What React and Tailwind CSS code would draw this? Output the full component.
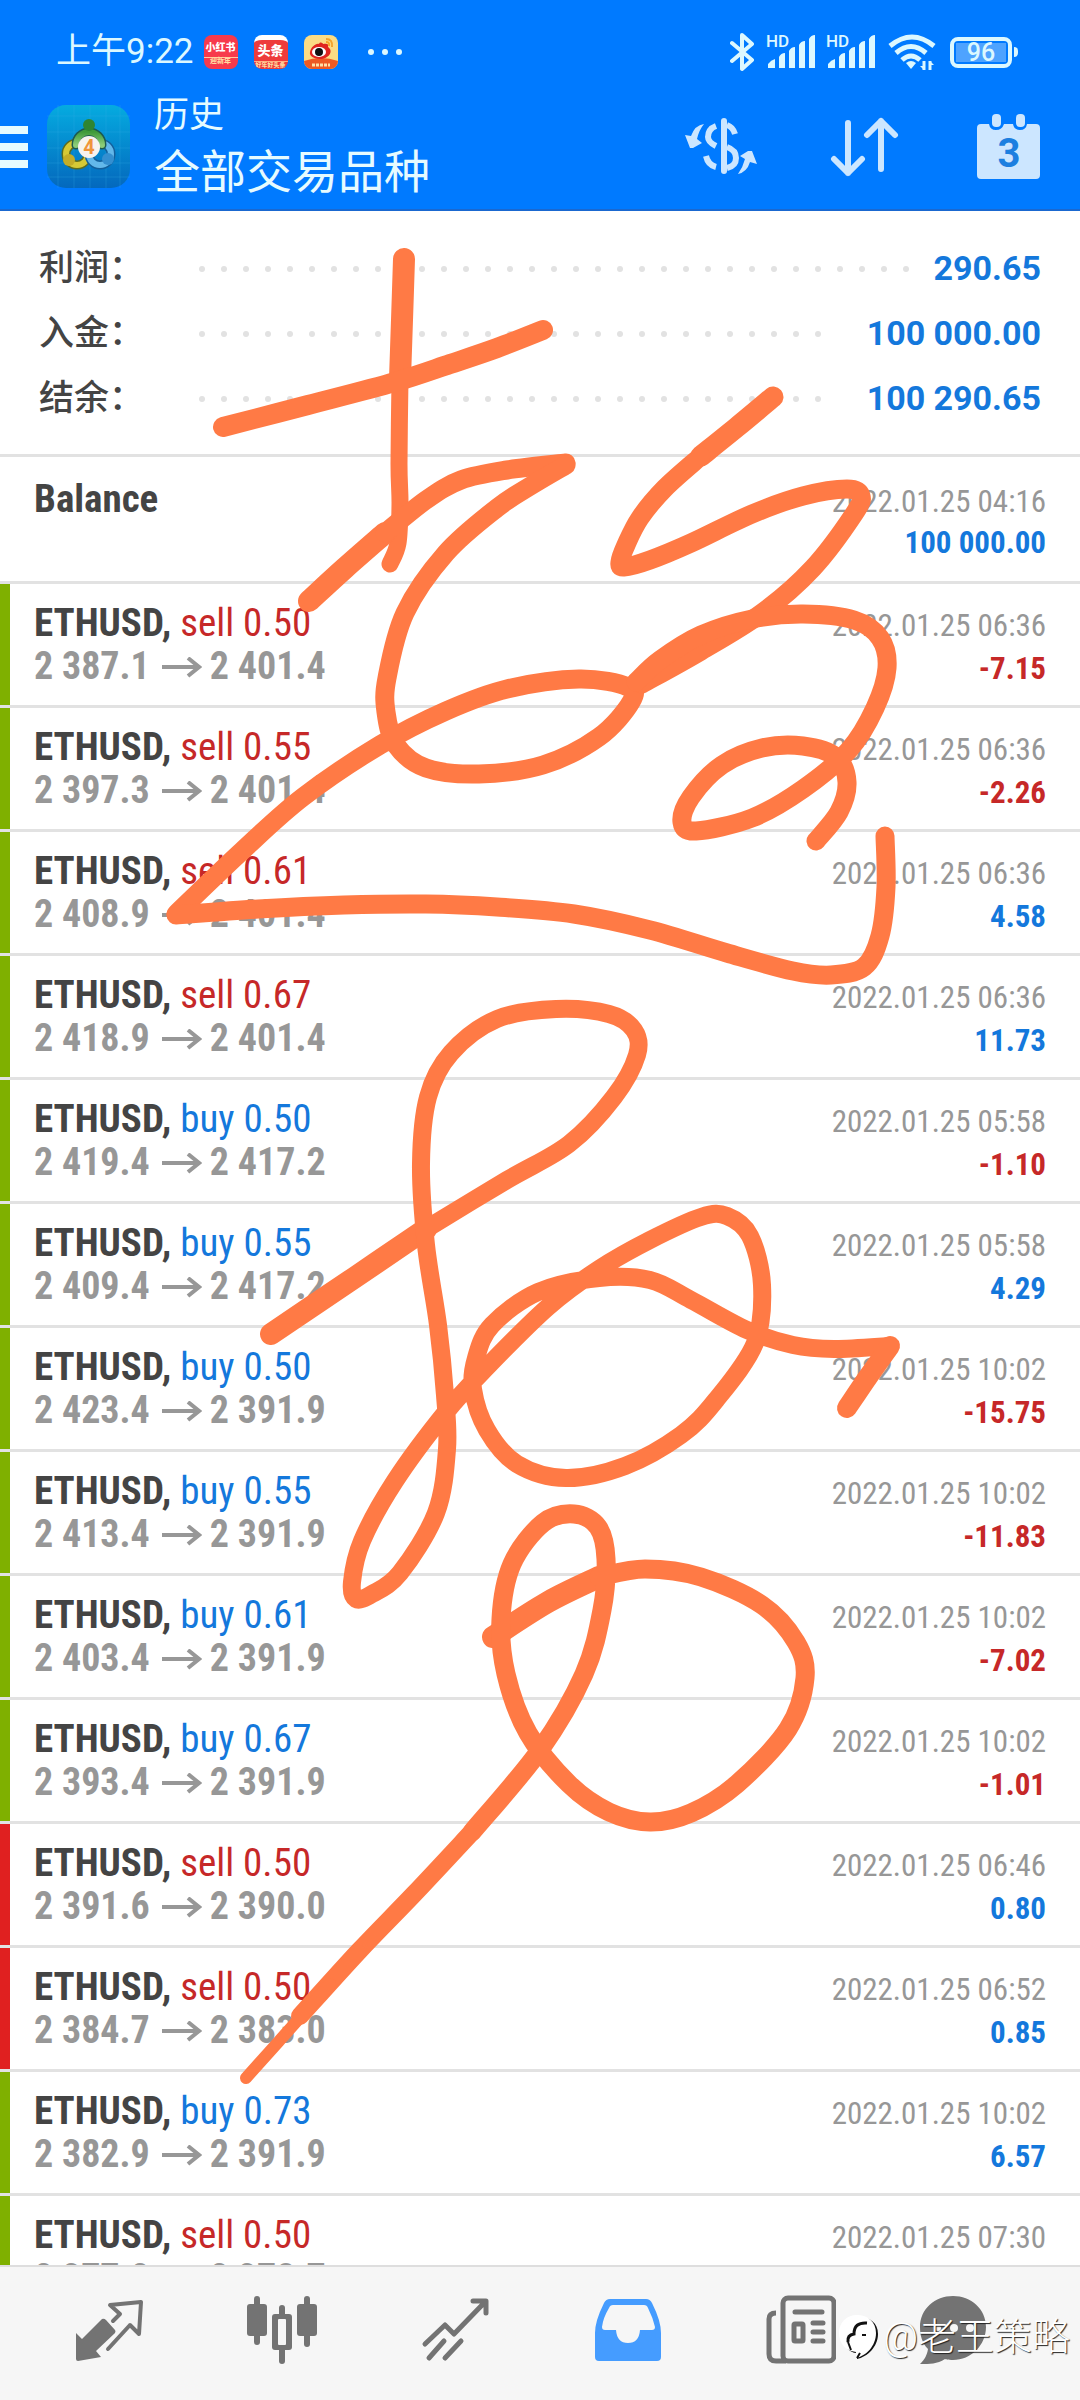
import React from "react";

const summary = [
  { label: "利润", value: "290.65", dots: 33 },
  { label: "入金", value: "100 000.00", dots: 29 },
  { label: "结余", value: "100 290.65", dots: 29 },
];

const deals = [
  { side: "sell", lot: "0.50", open: "2 387.1", close: "2 401.4", time: "2022.01.25 06:36", profit: "-7.15", mark: "green" },
  { side: "sell", lot: "0.55", open: "2 397.3", close: "2 401.4", time: "2022.01.25 06:36", profit: "-2.26", mark: "green" },
  { side: "sell", lot: "0.61", open: "2 408.9", close: "2 401.4", time: "2022.01.25 06:36", profit: "4.58", mark: "green" },
  { side: "sell", lot: "0.67", open: "2 418.9", close: "2 401.4", time: "2022.01.25 06:36", profit: "11.73", mark: "green" },
  { side: "buy", lot: "0.50", open: "2 419.4", close: "2 417.2", time: "2022.01.25 05:58", profit: "-1.10", mark: "green" },
  { side: "buy", lot: "0.55", open: "2 409.4", close: "2 417.2", time: "2022.01.25 05:58", profit: "4.29", mark: "green" },
  { side: "buy", lot: "0.50", open: "2 423.4", close: "2 391.9", time: "2022.01.25 10:02", profit: "-15.75", mark: "green" },
  { side: "buy", lot: "0.55", open: "2 413.4", close: "2 391.9", time: "2022.01.25 10:02", profit: "-11.83", mark: "green" },
  { side: "buy", lot: "0.61", open: "2 403.4", close: "2 391.9", time: "2022.01.25 10:02", profit: "-7.02", mark: "green" },
  { side: "buy", lot: "0.67", open: "2 393.4", close: "2 391.9", time: "2022.01.25 10:02", profit: "-1.01", mark: "green" },
  { side: "sell", lot: "0.50", open: "2 391.6", close: "2 390.0", time: "2022.01.25 06:46", profit: "0.80", mark: "red" },
  { side: "sell", lot: "0.50", open: "2 384.7", close: "2 383.0", time: "2022.01.25 06:52", profit: "0.85", mark: "red" },
  { side: "buy", lot: "0.73", open: "2 382.9", close: "2 391.9", time: "2022.01.25 10:02", profit: "6.57", mark: "green" },
  { side: "sell", lot: "0.50", open: "2 377.2", close: "2 378.7", time: "2022.01.25 07:30", profit: "-0.75", mark: "green" },
];

// pen strokes, each one a list of points on a 1080 x 2400 canvas
const strokes = [
  { width: 22, points: [[404, 259], [402, 320], [400, 379]] },
  { width: 17, points: [[400, 379], [399, 464], [400, 504], [398, 543], [390, 564]] },
  { width: 20, points: [[223, 427], [308, 405], [395, 382], [450, 364], [497, 348], [543, 330]] },
  { width: 22, points: [[309, 601], [345, 568], [385, 533]] },
  { width: 19, points: [[385, 533], [426, 500], [461, 480], [507, 470], [566, 463]] },
  { width: 19, points: [[566, 465], [532, 485], [497, 508], [446, 553], [405, 613], [387, 678], [386, 712], [396, 745], [426, 768], [479, 774], [543, 765], [599, 737], [631, 702], [628, 687], [579, 679], [507, 689], [446, 711], [380, 745], [303, 797], [242, 851], [176, 914]] },
  { width: 19, points: [[176, 915], [258, 909], [344, 905], [426, 904], [497, 907], [574, 914], [650, 930], [727, 953], [793, 971], [831, 975], [864, 967], [880, 936], [886, 887], [885, 836]] },
  { width: 21, points: [[773, 397], [737, 427], [701, 456]] },
  { width: 19, points: [[701, 456], [665, 488], [640, 518], [626, 545], [620, 562], [624, 567], [650, 560], [691, 543], [752, 514], [803, 496], [847, 489], [861, 496], [854, 514], [813, 568], [762, 613], [701, 651], [642, 684]] },
  { width: 19, points: [[636, 682], [660, 660], [701, 635], [752, 619], [803, 614], [854, 620], [880, 638], [887, 668], [875, 708], [849, 750], [803, 789], [752, 818], [696, 831], [682, 822], [691, 797], [722, 765], [762, 748], [803, 746], [836, 757], [847, 782], [839, 812], [816, 841]] },
  { width: 22, points: [[271, 1334], [354, 1278], [426, 1229]] },
  { width: 18, points: [[426, 1229], [507, 1180], [569, 1144], [614, 1097], [637, 1055], [634, 1030], [609, 1014], [556, 1009], [497, 1019], [451, 1053], [428, 1097], [421, 1164], [426, 1245], [438, 1325], [445, 1395], [447, 1449], [436, 1513], [400, 1573], [372, 1594], [356, 1599], [352, 1582], [362, 1541], [395, 1481], [446, 1412], [487, 1367], [548, 1307], [599, 1269], [650, 1240], [701, 1217], [727, 1216], [750, 1236], [762, 1285], [755, 1343], [716, 1400], [681, 1435], [625, 1466], [566, 1478], [517, 1464], [487, 1430], [473, 1389], [476, 1358], [492, 1325], [538, 1292], [599, 1278], [650, 1280], [691, 1300], [747, 1330], [793, 1345], [834, 1349], [890, 1346]] },
  { width: 20, points: [[890, 1346], [868, 1377], [847, 1408]] },
  { width: 22, points: [[493, 1637], [548, 1602], [599, 1577]] },
  { width: 19, points: [[599, 1577], [645, 1569], [701, 1577], [762, 1605], [796, 1642], [805, 1678], [788, 1729], [737, 1784], [691, 1813], [650, 1822], [609, 1812], [569, 1784], [528, 1733], [506, 1674], [501, 1619], [512, 1564], [543, 1523], [574, 1514], [598, 1527], [606, 1559], [602, 1610], [584, 1674], [540, 1750], [472, 1832]] },
  { width: 18, points: [[472, 1832], [414, 1894], [359, 1951], [300, 2016]] },
  { width: 12, points: [[330, 1984], [280, 2040], [246, 2078]] },
];

const toPath = (points) => {
  let d = `M${points[0][0]} ${points[0][1]}`;
  for (let i = 0; i < points.length - 1; i++) {
    const p0 = points[i - 1] || points[i];
    const p1 = points[i];
    const p2 = points[i + 1];
    const p3 = points[i + 2] || p2;
    d += `C${p1[0] + (p2[0] - p0[0]) / 6} ${p1[1] + (p2[1] - p0[1]) / 6} ${p2[0] - (p3[0] - p1[0]) / 6} ${p2[1] - (p3[1] - p1[1]) / 6} ${p2[0]} ${p2[1]}`;
  }
  return d;
};

const Handwriting = () => (
  <svg
    viewBox="0 0 1080 2400"
    className="absolute inset-0 w-full h-full pointer-events-none"
    fill="none"
    stroke="#ff7a45"
    strokeLinecap="round"
    strokeLinejoin="round"
    aria-hidden="true"
  >
    <path d="M628 677L655 655L701 631L752 612L757 620L701 656L642 692Z" fill="#ff7a45" stroke="none" />
    {strokes.map((s, i) => (
      <path key={i} d={toPath(s.points)} strokeWidth={s.width} />
    ))}
  </svg>
);

const Signal = () => (
  <div className="relative w-[50px] h-[34px]">
    <span className="absolute left-0 -top-1 text-[17px] leading-5 font-medium">HD</span>
    <svg viewBox="0 0 50 34" className="w-full h-full" fill="currentColor">
      <path d="M2 33v-4q3-4 7-5v9zM13 33V22q2-4 6-4v15zM23 33V16q2-4 6-4v21zM33 33V10q2-4 6-4v27zM43 33V4q2-4 6-4v33z" />
    </svg>
  </div>
);

const AppBadge = ({ children, className }) => (
  <span className={`flex flex-col items-center w-[34px] h-[34px] rounded-lg overflow-hidden text-white text-[13px] leading-none font-black ${className}`}>
    {children}
  </span>
);

const StatusBar = () => (
  <div className="flex items-center justify-between h-[84px] pt-5 pl-14 pr-[62px] text-[#dcf8ff]">
    <div className="flex items-center">
      <span className="text-[35px] leading-10 whitespace-nowrap">上午9:22</span>
      <div className="flex gap-4 ml-2.5">
        <AppBadge className="bg-[#f73a4c]">
          <span className="mt-2 text-[10px] text-center whitespace-nowrap">小红书</span>
          <span className="mt-1 w-full border-t border-[#ffc9a0] text-center text-[7px] text-[#ffd9a0] whitespace-nowrap">迎新年</span>
        </AppBadge>
        <AppBadge className="bg-[#ee3b3b] border-t-[5px] border-white">
          <span className="mt-1 whitespace-nowrap">头条</span>
          <span className="mt-1 w-full border-t border-[#ffb080] text-center text-[6px] text-[#ffd9a0] whitespace-nowrap">好年好头条</span>
        </AppBadge>
        <AppBadge className="bg-[#fbdc85]">
          <svg viewBox="0 0 34 34" className="w-full h-full">
            <path d="M0 26q17-6 34 0v8H0z" fill="#ee5a24" />
            <path d="M6 17c1-5 6-9 9-8 1-3 4-1 4 0 4-1 6 0 5 3 6 4 1 12-8 12-6 0-11-3-10-7z" fill="#e0251f" />
            <ellipse cx="15" cy="17" rx="7" ry="5" fill="#fff" />
            <circle cx="15" cy="17" r="4" fill="#111" />
            <path d="M22 4q7 0 6 8M22 7q4 0 3 4" fill="none" stroke="#f3a32b" strokeWidth="2" />
            <path d="M8 30h18" stroke="#ffe0a8" strokeWidth="3" strokeDasharray="3 1" />
          </svg>
        </AppBadge>
      </div>
      <svg viewBox="0 0 34 6" className="w-[34px] h-1.5 ml-[30px]" fill="currentColor">
        <circle cx="3" cy="3" r="3" /><circle cx="17" cy="3" r="3" /><circle cx="31" cy="3" r="3" />
      </svg>
    </div>
    <div className="flex items-center">
      <svg viewBox="0 0 24 40" className="w-6 h-10 mr-3" fill="none" stroke="currentColor" strokeWidth="4" strokeLinecap="round" strokeLinejoin="round">
        <path d="M2 11l20 17-10 9V3l10 9L2 29" />
      </svg>
      <Signal />
      <div className="w-2.5" />
      <Signal />
      <svg viewBox="0 0 48 36" className="w-12 h-9 ml-3 mr-3.5" fill="none" stroke="currentColor" strokeWidth="5">
        <path d="M2 12q22-18 44 0" />
        <path d="M8 19q15-13 30 0" />
        <path d="M14 26q9-8 18 0" />
        <path d="M18 29q5-4 10 0l-5 6z" fill="currentColor" stroke="none" />
        <path d="M36 27v9M42 27v9" strokeWidth="3" />
        <path d="M32 32h4v4zM46 31h-4v-4z" fill="currentColor" stroke="none" />
      </svg>
      <div className="flex items-center">
        <span className="flex items-center justify-center w-[62px] h-[31px] rounded-lg border-4 border-current p-0.5">
          <span className="flex items-center justify-center w-full h-full bg-[#4ea3ff] text-[25px] leading-none font-medium">96</span>
        </span>
        <span className="w-1 h-2.5 ml-0.5 rounded-r bg-current" />
      </div>
    </div>
  </div>
);

const AppLogo = () => (
  <svg viewBox="0 0 83 83" className="w-[83px] h-[83px] shrink-0">
    <defs>
      <linearGradient id="logoBg" x1="0" y1="0" x2="0" y2="1">
        <stop offset="0" stopColor="#05abe0" />
        <stop offset="1" stopColor="#0468bd" />
      </linearGradient>
      <linearGradient id="logoGreen" x1="0" y1="0" x2="0" y2="1">
        <stop offset="0" stopColor="#3f9a3a" />
        <stop offset="1" stopColor="#8ccc78" />
      </linearGradient>
    </defs>
    <rect width="83" height="83" rx="19" fill="url(#logoBg)" />
    <path d="M11 0v83M27 0v83M43 0v83M59 0v83M73 0v83M0 11h83M0 27h83M0 43h83M0 58h83M0 72h83" stroke="#3bb4ea" strokeOpacity=".25" />
    <g fill="none" strokeLinecap="round">
      <circle cx="30" cy="49" r="11" stroke="#5c6c20" strokeWidth="9" />
      <circle cx="30" cy="49" r="11" stroke="#d6c935" strokeWidth="6" />
      <circle cx="53" cy="49" r="11" stroke="#14609c" strokeWidth="9" />
      <circle cx="53" cy="49" r="11" stroke="#63b8ea" strokeWidth="6" />
      <path d="M29 40a13 13 0 1 1 26 0" stroke="#1d5a50" strokeWidth="9" />
      <path d="M29 40a13 13 0 1 1 26 0" stroke="url(#logoGreen)" strokeWidth="6" />
    </g>
    <circle cx="42" cy="20" r="6" fill="#2f8532" />
    <circle cx="22" cy="55" r="6" fill="#c4ad28" />
    <circle cx="61" cy="54" r="6" fill="#348fd0" />
    <circle cx="42" cy="42" r="11" fill="#f7f3ee" />
    <text x="42" y="49" textAnchor="middle" fontSize="20" fontWeight="700" fill="#f0953a">4</text>
  </svg>
);

const Header = () => (
  <header className="bg-[#007aff] border-b-2 border-[#1a68d0]">
    <StatusBar />
    <div className="flex items-center h-[125px] pr-10">
      <button aria-label="菜单" className="flex flex-col gap-[9px] w-7 mr-[19px] shrink-0">
        <span className="h-2 bg-[#e6fbff]" />
        <span className="h-2 bg-[#e6fbff]" />
        <span className="h-2 bg-[#e6fbff]" />
      </button>
      <AppLogo />
      <div className="flex-1 ml-6 text-[#e6fbff]">
        <h2 className="text-[35px] leading-[50px]">历史</h2>
        <h1 className="text-[46px] leading-[62px]">全部交易品种</h1>
      </div>
      <div className="flex items-center text-[#cce6ff]">
        <button aria-label="交易品种" className="mr-[72px]">
          <svg viewBox="0 0 74 60" className="w-[74px] h-[60px]" fill="none" stroke="currentColor">
            <path d="M40 4v50" strokeWidth="6" strokeLinecap="round" />
            <path d="M32 9q-8 3-8 11 0 5 8 9M43 8q6 2 8 9M43 30q9 3 9 11 0 8-9 10M32 50q-8-2-10-11" strokeWidth="6" />
            <path d="M20 7Q11 8 7 19L1 18l5 13h3l9-5-5-4q2-9 7-15zM54 57q9-2 12-12l7 2-5-13h-4l-8 5 5 3q-2 8-7 15z" fill="currentColor" stroke="none" />
          </svg>
        </button>
        <button aria-label="排序" className="mr-[77px]">
          <svg viewBox="0 0 70 60" className="w-[70px] h-[60px]" fill="none" stroke="currentColor" strokeWidth="6" strokeLinecap="round" strokeLinejoin="round">
            <path d="M18 6v50M4 42l14 14 14-14M51 52V4M37 18L51 4l14 14" />
          </svg>
        </button>
        <button aria-label="日期">
          <svg viewBox="0 0 63 66" className="w-[63px] h-[66px]" fill="currentColor">
            <path d="M4 10h8q1 6 7 6t8-6h9q1 6 7 6t7-6h9q4 0 4 4v47q0 4-4 4H4q-4 0-4-4V14q0-4 4-4z" />
            <rect x="15" y="0" width="9" height="13" rx="4" />
            <rect x="39" y="0" width="9" height="13" rx="4" />
            <text x="32" y="53" textAnchor="middle" fontSize="40" fontWeight="700" fill="#1c7fe0">3</text>
          </svg>
        </button>
      </div>
    </div>
  </header>
);

const Summary = () => (
  <section className="pt-[25px] pb-[23px] pl-[39px] pr-[39px] border-b-[3px] border-[#e2e2e2]">
    {summary.map((row) => (
      <div key={row.label} className="flex items-center h-[65px]">
        <span className="w-[160px] shrink-0 text-[35px] leading-[65px] font-medium text-[#444]">{row.label}：</span>
        <span className="flex flex-1 flex-wrap gap-4 h-1.5 mr-4 overflow-hidden">
          {Array.from({ length: row.dots }, (_, i) => (
            <span key={i} className="w-1.5 h-1.5 rounded-full bg-[#e2e2e2]" />
          ))}
        </span>
        <span className="text-[34px] leading-[65px] font-bold text-[#1478dc] whitespace-nowrap">{row.value}</span>
      </div>
    ))}
  </section>
);

const Arrow = () => (
  <svg viewBox="0 0 40 22" className="inline-block w-10 h-[22px] ml-3 mr-2 align-baseline" fill="none" stroke="currentColor" strokeWidth="4">
    <path d="M0 10h37M26 1l11 9-11 9" />
  </svg>
);

const Deal = ({ deal }) => (
  <li className="flex border-b-[3px] border-[#e2e2e2]">
    <span className={`w-2.5 shrink-0 ${deal.mark === "red" ? "bg-[#e02020]" : "bg-[#7fb000]"}`} />
    <div className="flex-1 h-[121px] pt-[18px] pl-6 pr-[34px]">
      <div className="flex items-baseline justify-between h-[43px] leading-[43px]">
        <span className="text-[39px] font-bold text-[#444]">
          ETHUSD,{" "}
          <span className={deal.side === "sell" ? "font-normal text-[#c62828]" : "font-normal text-[#1478dc]"}>
            {deal.side} {deal.lot}
          </span>
        </span>
        <span className="text-[31px] text-[#979797]">{deal.time}</span>
      </div>
      <div className="flex items-baseline justify-between h-[43px] leading-[43px]">
        <span className="text-[38px] font-bold text-[#979797]">
          {deal.open}
          <Arrow />
          {deal.close}
        </span>
        <span className={`text-[31px] font-bold ${deal.profit.startsWith("-") ? "text-[#c62828]" : "text-[#1478dc]"}`}>
          {deal.profit}
        </span>
      </div>
    </div>
  </li>
);

const TabBar = () => (
  <nav className="grid grid-cols-[4fr_4fr_4fr_4fr_4fr_3fr] h-[135px] pl-[22px] pr-[62px] pb-2 shrink-0 border-t-2 border-[#dedede] bg-[#f6f6f6] text-[#737373]">
    <button aria-label="行情" className="flex items-center justify-center">
      <svg viewBox="0 0 70 70" className="w-[70px] h-[70px]" fill="none" stroke="currentColor">
        <path d="M2 38l6 6 20-20q2-1 4 1l9 10q1 1 0 3L22 56l5 6-23 4q-2 0-2-2z" fill="currentColor" stroke="none" />
        <path d="M39 26l7-7-10-9 31-3-2 32-9-9-22 24" strokeWidth="4" strokeLinejoin="round" strokeLinecap="round" />
      </svg>
    </button>
    <button aria-label="图表" className="flex items-center justify-center">
      <svg viewBox="0 0 70 70" className="w-[70px] h-[70px]" fill="currentColor">
        <rect x="7" y="1" width="6" height="49" rx="3" />
        <rect x="0" y="9" width="20" height="32" rx="3" />
        <rect x="57" y="1" width="6" height="51" rx="3" />
        <rect x="50" y="9" width="20" height="32" rx="3" />
        <rect x="32" y="10" width="6" height="59" rx="3" />
        <path d="M28 19h14q3 0 3 3v30q0 3-3 3H28q-3 0-3-3V22q0-3 3-3z" />
        <rect x="31" y="24" width="8" height="26" rx="1" fill="#f6f6f6" />
      </svg>
    </button>
    <button aria-label="交易" className="flex items-center justify-center">
      <svg viewBox="0 0 70 70" className="w-[70px] h-[70px]" fill="none" stroke="currentColor" strokeWidth="5" strokeLinecap="round" strokeLinejoin="round">
        <path d="M5 49l20-19 9 9L65 7M53 6l13 0v12M9 63l15-17M25 63l16-17" />
      </svg>
    </button>
    <button aria-label="历史" className="flex items-center justify-center text-[#459cff]">
      <svg viewBox="0 0 70 70" className="w-[70px] h-[70px]" fill="currentColor" fillRule="evenodd">
        <path d="M17 4h36q4 0 6 4 9 18 9 30v24q0 4-4 4H6q-4 0-4-4V38Q2 26 11 8q2-4 6-4zM20 10q-3 0-4 3Q10 23 9 32q0 3 3 3h11q1 13 12 13t12-13h12q3 0 3-3-2-9-7-19-1-3-4-3z" />
      </svg>
    </button>
    <button aria-label="新闻" className="flex items-center justify-center">
      <svg viewBox="0 0 70 70" className="w-[70px] h-[70px]" fill="none" stroke="currentColor" strokeWidth="5">
        <path d="M10 18q-7 0-7 6v35q0 7 7 7h10" />
        <rect x="17" y="3" width="51" height="63" rx="5" />
        <path d="M29 17h27M47 28h10M47 37h10M47 46h10" strokeLinecap="round" />
        <rect x="28" y="29" width="9" height="17" rx="1" />
      </svg>
    </button>
    <button aria-label="消息" className="flex items-center justify-center">
      <svg viewBox="0 0 70 70" className="w-[70px] h-[70px] shrink-0" fill="currentColor">
        <path d="M35 1c18 0 33 13 33 31S53 65 35 65c-5 0-8-1-8-1-8 5-15 5-25 5 5-5 7-9 8-15C4 48 2 40 2 32 2 14 17 1 35 1z" />
        <circle cx="20" cy="33" r="3" fill="#f6f6f6" />
        <circle cx="36" cy="33" r="4" fill="#f6f6f6" />
        <circle cx="52" cy="33" r="4" fill="#f6f6f6" />
      </svg>
    </button>
  </nav>
);

const Watermark = () => (
  <div className="absolute right-2.5 bottom-10 flex items-center gap-1 text-white">
    <svg viewBox="0 0 40 46" className="w-10 h-[46px]">
      <path d="M20 3C9 3 3 10 3 20c0 11 7 19 15 19v6c10-2 21-12 21-25C39 9 31 3 20 3z" fill="#111" />
      <path d="M18 1C7 1 0 9 0 19c0 11 7 18 17 19v6c10-2 20-12 20-25C37 8 29 1 18 1z" fill="#fff" />
      <path d="M28 9q-13-1-13 11-7 1-6 8" fill="none" stroke="#111" strokeWidth="3" />
      <path d="M9 28l3 8M23 21h4M18 44l3-5" fill="none" stroke="#111" strokeWidth="2" />
    </svg>
    <span className="text-[38px] leading-[46px] font-light whitespace-nowrap [text-shadow:1px_1px_1px_#222]">@老王策略</span>
  </div>
);

const App = () => (
  <div className="relative flex flex-col h-screen overflow-hidden bg-white font-['Roboto','Noto_Sans_CJK_SC',sans-serif]">
    <Header />
    <Summary />
    <ul className="flex-1 min-h-0 overflow-hidden font-['Roboto_Condensed','Roboto',sans-serif]">
      <li className="h-[127px] pt-[21px] pl-[34px] pr-[34px] border-b-[3px] border-[#e2e2e2]">
        <div className="flex items-baseline justify-between h-[43px] leading-[43px]">
          <span className="text-[39px] font-bold text-[#444]">Balance</span>
          <span className="text-[31px] text-[#979797]">2022.01.25 04:16</span>
        </div>
        <div className="text-right text-[31px] leading-[43px] font-bold text-[#1478dc]">100 000.00</div>
      </li>
      {deals.map((deal, i) => (
        <Deal key={i} deal={deal} />
      ))}
    </ul>
    <TabBar />
    <Handwriting />
    <Watermark />
  </div>
);

export default App;
